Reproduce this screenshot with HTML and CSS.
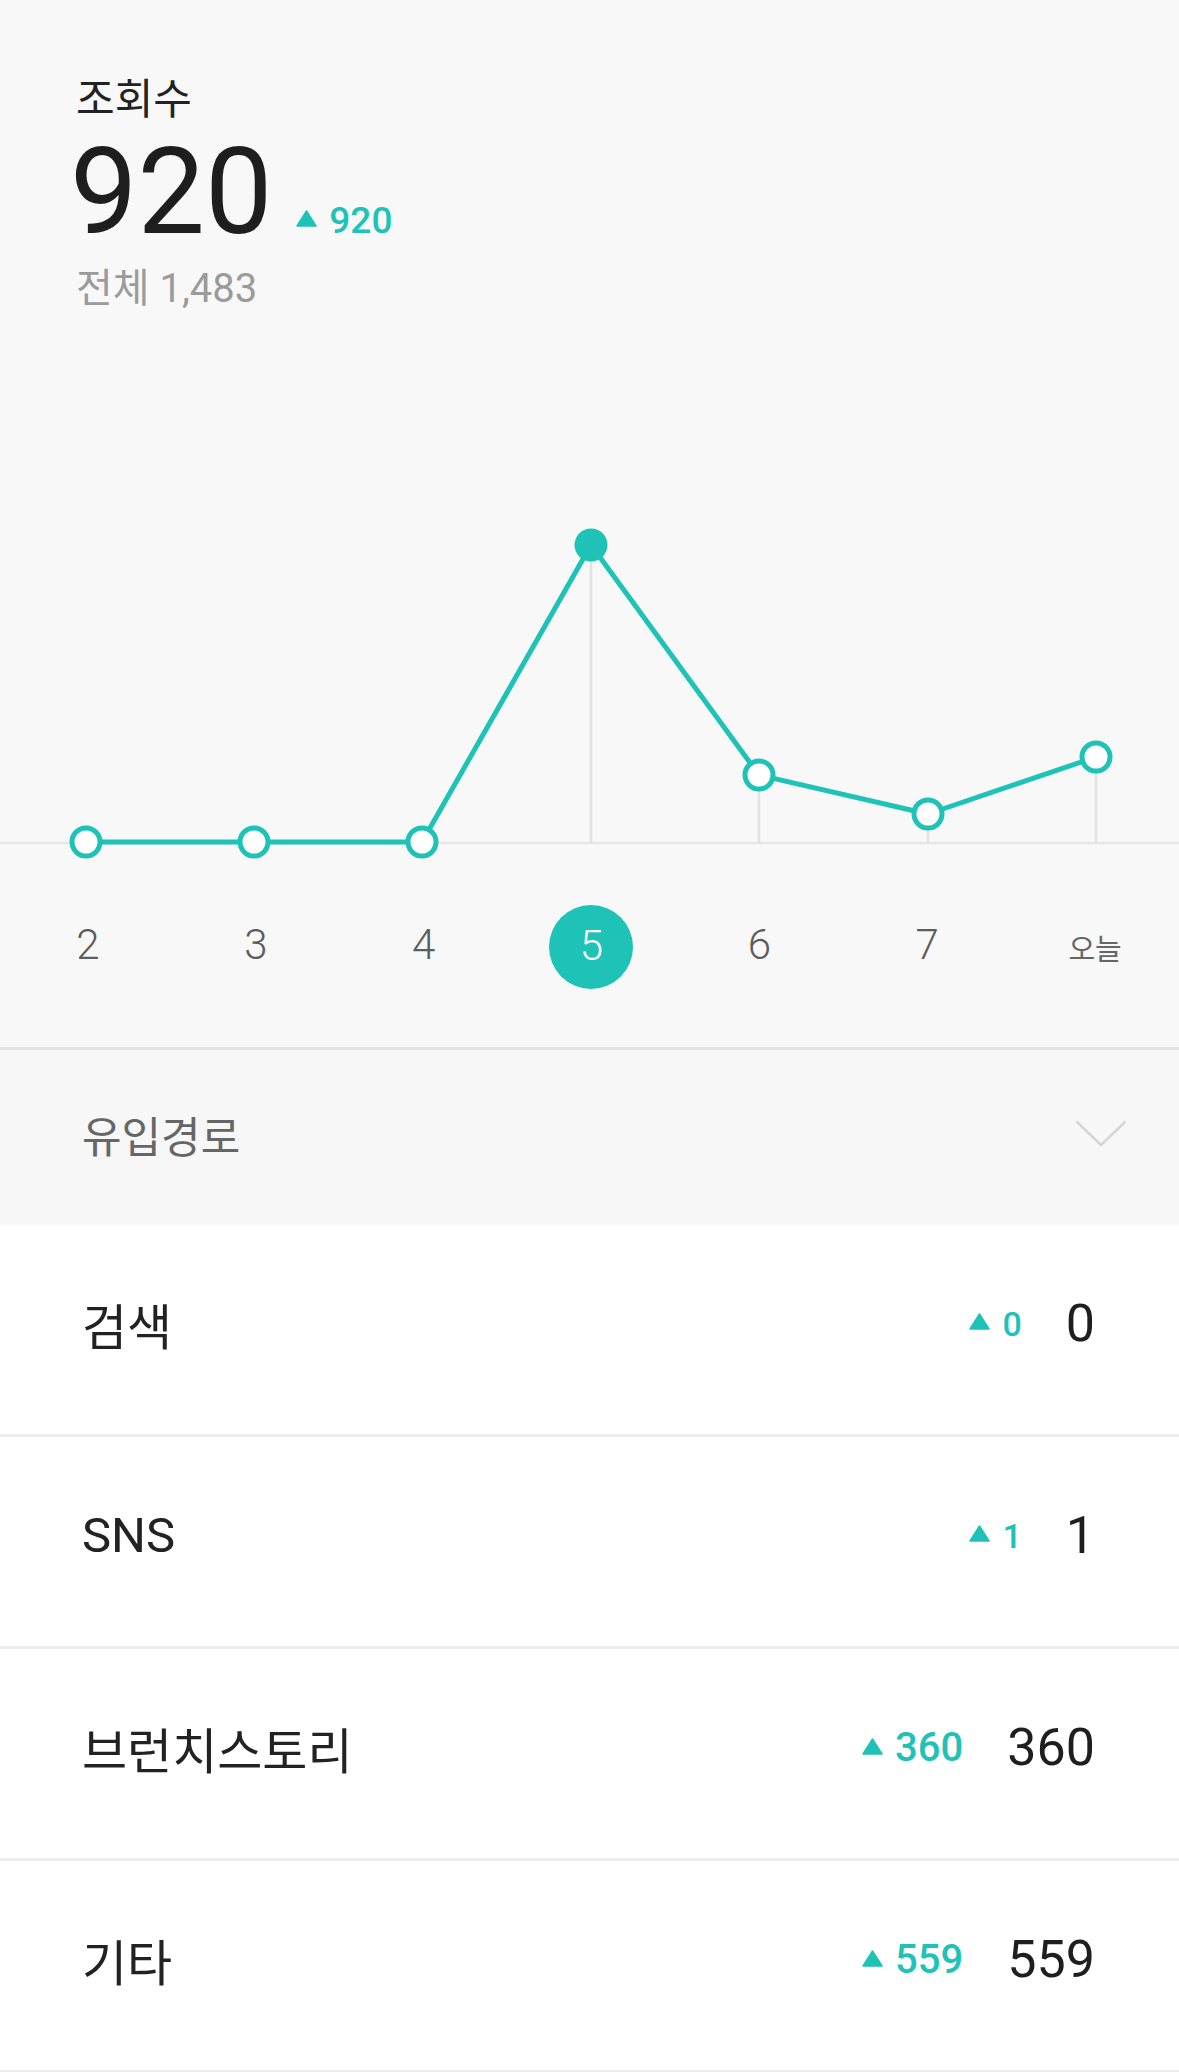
FILE: index.html
```html
<!DOCTYPE html>
<html lang="ko">
<head>
  <meta charset="UTF-8">
  <meta name="viewport" content="width=device-width, initial-scale=1.0">
  <title>조회수</title>
  <link rel="stylesheet" href="styles.css">
</head>
<body>
  <section class="summary">
    <h2 class="summary-title">조회수</h2>
    <div class="summary-count">
      <span class="count">920</span>
      <span class="delta"><svg class="up" viewBox="0 0 21 17"><path d="M10.5 1 L20 16 H1 Z"/></svg>920</span>
    </div>
    <p class="summary-total">전체 1,483</p>
  </section>

  <div class="chart">
    <svg viewBox="0 0 1179 511" preserveAspectRatio="none">
      <line class="axis" x1="0" y1="484" x2="1179" y2="484"/>
      <line class="guide" x1="591" y1="186" x2="591" y2="484"/>
      <line class="guide" x1="759" y1="416" x2="759" y2="484"/>
      <line class="guide" x1="928" y1="455" x2="928" y2="484"/>
      <line class="guide" x1="1096" y1="398" x2="1096" y2="484"/>
      <polyline class="trend" points="86,483 254,483 422,483 591,186 759,416 928,455 1096,398"/>
      <circle class="dot" cx="86" cy="483" r="14"/>
      <circle class="dot" cx="254" cy="483" r="14"/>
      <circle class="dot" cx="422" cy="483" r="14"/>
      <circle class="dot dot-active" cx="591" cy="186" r="16.5"/>
      <circle class="dot" cx="759" cy="416" r="14"/>
      <circle class="dot" cx="928" cy="455" r="14"/>
      <circle class="dot" cx="1096" cy="398" r="14"/>
    </svg>
  </div>

  <ul class="days">
    <li><span>2</span></li>
    <li><span>3</span></li>
    <li><span>4</span></li>
    <li class="active"><span>5</span></li>
    <li><span>6</span></li>
    <li><span>7</span></li>
    <li class="today"><span>오늘</span></li>
  </ul>

  <div class="inflow-head">
    <span>유입경로</span>
    <svg class="chevron" viewBox="0 0 52 27"><polyline points="1.5,1.5 26,25 50.5,1.5"/></svg>
  </div>

  <ul class="inflow-list">
    <li>
      <span class="label">검색</span>
      <span class="stat">
        <span class="delta delta-sm"><svg class="up" viewBox="0 0 21 17"><path d="M10.5 1 L20 16 H1 Z"/></svg>0</span>
        <span class="value">0</span>
      </span>
    </li>
    <li>
      <span class="label">SNS</span>
      <span class="stat">
        <span class="delta delta-sm"><svg class="up" viewBox="0 0 21 17"><path d="M10.5 1 L20 16 H1 Z"/></svg>1</span>
        <span class="value">1</span>
      </span>
    </li>
    <li>
      <span class="label">브런치스토리</span>
      <span class="stat">
        <span class="delta"><svg class="up" viewBox="0 0 21 17"><path d="M10.5 1 L20 16 H1 Z"/></svg>360</span>
        <span class="value">360</span>
      </span>
    </li>
    <li>
      <span class="label">기타</span>
      <span class="stat">
        <span class="delta"><svg class="up" viewBox="0 0 21 17"><path d="M10.5 1 L20 16 H1 Z"/></svg>559</span>
        <span class="value">559</span>
      </span>
    </li>
  </ul>
</body>
</html>
```

FILE: styles.css
```css
* {
  box-sizing: border-box;
}
body {
  margin: 0;
  background: #f8f8f8;
  color: #222;
  font-family: Roboto, "Noto Sans CJK KR", sans-serif;
}
.summary {
  padding: 75px 0 45px 76px;
}
.summary-title {
  margin: 0;
  font-size: 42px;
  line-height: 50px;
  font-weight: 400;
  color: #222;
}
.summary-count {
  display: flex;
  align-items: baseline;
  gap: 24px;
  margin-top: 7px;
  height: 120px;
}
.count {
  margin-left: -6px;
  font-size: 120px;
  line-height: 120px;
  color: #1e1e1e;
}
.delta {
  display: inline-block;
  font-size: 37px;
  font-weight: 500;
  color: #1ec2b7;
}
.delta .up {
  width: 21px;
  height: 17px;
  margin-right: 12px;
  vertical-align: 0.15em;
  fill: #1ec2b7;
  stroke: #1ec2b7;
  stroke-width: 1.5;
  stroke-linejoin: round;
}
.inflow-list .delta {
  font-size: 40px;
}
.inflow-list .delta-sm {
  font-size: 34px;
}
.summary-total {
  margin: 12px 0 0;
  font-size: 40px;
  line-height: 50px;
  color: #9b9b9b;
}
.chart svg {
  display: block;
  width: 100%;
  height: 511px;
}
.axis {
  stroke: #e6e6e6;
  stroke-width: 2.5;
}
.guide {
  stroke: #e2e2e2;
  stroke-width: 2.5;
}
.trend {
  fill: none;
  stroke: #1ec2b7;
  stroke-width: 5;
  stroke-linejoin: round;
}
.dot {
  fill: #fff;
  stroke: #1ec2b7;
  stroke-width: 5;
}
.dot-active {
  fill: #1ec2b7;
  stroke: none;
}
.days {
  display: grid;
  grid-template-columns: repeat(7, 1fr);
  margin: 0;
  padding: 35px 0 58px 4px;
  list-style: none;
  border-bottom: 3px solid #e2e2e2;
}
.days li {
  display: flex;
  justify-content: center;
  align-items: center;
  height: 84px;
}
.days span {
  font-size: 42px;
  font-weight: 300;
  color: #5c5c5c;
  padding-bottom: 6px;
}
.days .active span {
  display: flex;
  align-items: center;
  justify-content: center;
  width: 84px;
  height: 84px;
  padding-bottom: 4px;
  border-radius: 50%;
  background: #1ec2b7;
  color: #fff;
}
.days .today span {
  font-size: 29px;
  font-weight: 400;
  color: #666;
  padding-bottom: 0;
}
.inflow-head {
  display: flex;
  justify-content: space-between;
  align-items: center;
  height: 175px;
  padding: 0 52px 8px 82px;
  background: #f7f7f7;
  font-size: 43px;
  color: #666;
}
.chevron {
  width: 52px;
  height: 27px;
  fill: none;
  stroke: #d6d6d6;
  stroke-width: 2.5;
}
.inflow-list {
  margin: 0;
  padding: 0;
  list-style: none;
  background: #fff;
}
.inflow-list li {
  display: flex;
  justify-content: space-between;
  align-items: center;
  height: 212px;
  padding: 0 84px 12px 82px;
  border-bottom: 3px solid #ededed;
}
.label {
  font-size: 49px;
  color: #222;
}
.stat {
  display: flex;
  align-items: center;
  gap: 44px;
}
.value {
  font-size: 52px;
  color: #1e1e1e;
}
```
